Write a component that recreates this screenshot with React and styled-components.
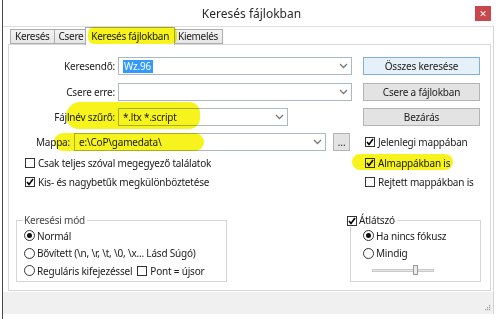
import React from 'react'
import styled, { createGlobalStyle } from 'styled-components'

const GlobalStyle = createGlobalStyle`
  html, body { margin:0; padding:0; background:#fff; }
  body {
    font-family: "Noto Sans", "DejaVu Sans", sans-serif;
    font-size: 10px;
    letter-spacing: -0.2px;
    color: #1b1b1b;
  }
  * { box-sizing: border-box; }
`

const Window = styled.div`
  position: relative;
  width: 498px;
  height: 319px;
  margin-left: 2px;
  border-left: 1px solid #4a4a4a;
  background: #fff;
  display: flex;
  flex-direction: column;
`

const TitleBar = styled.div`
  height: 26px;
  display: grid;
  grid-template-columns: 1fr auto 1fr;
  align-items: center;
`

const Title = styled.div`
  grid-column: 2;
  font-size: 12px;
  letter-spacing: 0;
  color: #2b2b2b;
`

const CloseButton = styled.div`
  grid-column: 3;
  justify-self: end;
  margin-right: 9px;
  width: 16px;
  height: 15px;
  background: #c7474c;
  color: #fff;
  display: flex;
  align-items: center;
  justify-content: center;
  font-size: 9px;
  line-height: 1;
`

const Client = styled.div`
  height: 288px;
  margin-right: 6px;
  border-top: 1px solid #dedede;
  border-right: 1px solid #d4d4d4;
  display: flex;
  flex-direction: column;
`

const TabArea = styled.div`
  flex: 1;
  display: flex;
  flex-direction: column;
  padding: 0 2px 0 5px;
`

const TabStrip = styled.div`
  height: 17px;
  display: flex;
  align-items: flex-end;
  padding-left: 2px;
`

const Tab = styled.div`
  position: relative;
  height: ${p => (p.$active ? 18 : 15)}px;
  margin: ${p => (p.$active ? '0 -2px -1px -2px' : '0 -1px 0 0')};
  padding: 0 ${p => (p.$active ? 5 : 4)}px;
  border: 1px solid #acacac;
  border-bottom: ${p => (p.$active ? 'none' : '1px solid #acacac')};
  background: ${p => (p.$active ? '#fff' : 'linear-gradient(#f3f3f3, #e6e6e6)')};
  z-index: ${p => (p.$active ? 2 : 1)};
  line-height: ${p => (p.$active ? 16 : 13)}px;
  letter-spacing: -0.3px;
  white-space: nowrap;
`

const Panel = styled.div`
  flex: 1;
  margin-bottom: 1px;
  border: 1px solid #d9d9d9;
  background: #fff;
  padding: 12px 9px 0 7px;
`

const TopGrid = styled.div`
  display: grid;
  grid-template-columns: 336px 117px;
  grid-template-rows: 26px 25px 25px 21px 19px 18px;
  column-gap: 11px;
  align-items: start;
`

const FieldRow = styled.div`
  display: flex;
  align-items: center;
  height: 18px;
  gap: ${p => p.$gap || 3}px;
`

const Label = styled.div`
  width: ${p => p.$w}px;
  text-align: right;
  white-space: nowrap;
`

const Combo = styled.div`
  width: ${p => p.$w}px;
  height: 18px;
  border: 1px solid #abb9c7;
  background: #fff;
  display: flex;
  align-items: center;
  justify-content: space-between;
  padding: 0 3px 0 4px;
  white-space: nowrap;
`

const Selected = styled.span`
  background: #3399ff;
  color: #fff;
  padding: 0 2px 0 1px;
  line-height: 13px;
`

const Chevron = () => (
  <svg width="9" height="6" viewBox="0 0 9 6">
    <polyline points="1,1 4.5,4.5 8,1" fill="none" stroke="#7a7a7a" strokeWidth="1.3" />
  </svg>
)

const Button = styled.div`
  width: ${p => p.$w || 117}px;
  height: 18px;
  border: 1px solid ${p => (p.$primary ? '#7cb3dc' : '#b4b4b4')};
  background: ${p => (p.$primary ? '#e6f0f8' : '#e3e3e3')};
  display: flex;
  align-items: center;
  justify-content: center;
  color: #222;
  margin-left: ${p => p.$ml || 0}px;
`

const CheckRow = styled.div`
  display: flex;
  align-items: center;
  height: 18px;
  gap: 3px;
  padding-left: ${p => p.$indent || 0}px;
  white-space: nowrap;
`

const Box = styled.span`
  width: 10px;
  height: 10px;
  border: 1px solid #333;
  background: #fff;
  display: inline-flex;
  align-items: center;
  justify-content: center;
  flex: none;
`

const Check = ({ on }) => (
  <Box>
    {on && (
      <svg width="8" height="8" viewBox="0 0 8 8">
        <polyline points="1,4 3,6.5 7,1" fill="none" stroke="#000" strokeWidth="1.6" />
      </svg>
    )}
  </Box>
)

const RadioCircle = styled.span`
  width: 11px;
  height: 11px;
  border: 1px solid #333;
  border-radius: 50%;
  background: #fff;
  display: inline-flex;
  align-items: center;
  justify-content: center;
  flex: none;
  &::after {
    content: '';
    width: 5px;
    height: 5px;
    border-radius: 50%;
    background: ${p => (p.$on ? '#111' : 'transparent')};
  }
`

const RadioRow = styled.div`
  display: flex;
  align-items: center;
  height: 17.5px;
  gap: 2px;
  padding-left: ${p => p.$indent || 0}px;
  white-space: nowrap;
`

const BottomRow = styled.div`
  display: flex;
  justify-content: space-between;
  margin-top: 23px;
`

const GroupBox = styled.fieldset`
  width: ${p => p.$w}px;
  height: 68px;
  margin: 0;
  padding: 0;
  border: 1px solid #d5d5d5;
  min-width: 0;
`

const Legend = styled.legend`
  margin-left: ${p => p.$ml}px;
  padding: 0 2px 0 1px;
  display: flex;
  align-items: center;
  gap: 2px;
  line-height: 13px;
  color: ${p => (p.$muted ? '#444' : '#1b1b1b')};
`

const SliderRow = styled.div`
  height: 16px;
  display: flex;
  align-items: center;
  padding-left: 21px;
`

const Track = styled.div`
  position: relative;
  width: 62px;
  height: 3px;
  border: 1px solid #c9c9c9;
  background: #e7e7e7;
`

const Thumb = styled.div`
  position: absolute;
  left: 40px;
  top: -5px;
  width: 5px;
  height: 10px;
  border: 1px solid #9a9a9a;
  background: #eaeaea;
`

const StatusBar = styled.div`
  height: 22px;
  background: #f0f0f0;
  display: flex;
  justify-content: flex-end;
  align-items: flex-end;
  padding: 0 2px 3px 0;
`

const Grip = () => (
  <svg width="7" height="7" viewBox="0 0 7 7">
    {[[5, 1], [3, 3], [5, 3], [1, 5], [3, 5], [5, 5]].map(([x, y], i) => (
      <rect key={i} x={x} y={y} width="1.2" height="1.2" fill="#9a9a9a" />
    ))}
  </svg>
)

const Highlight = styled.div`
  position: absolute;
  left: ${p => p.$x}px;
  top: ${p => p.$y}px;
  width: ${p => p.$w}px;
  height: ${p => p.$h}px;
  border-radius: ${p => p.$r};
  background: #f6f41c;
  mix-blend-mode: multiply;
  pointer-events: none;
  z-index: 5;
`

export default function App() {
  return (
    <>
      <GlobalStyle />
      <Window>
        <TitleBar>
          <Title>Keresés fájlokban</Title>
          <CloseButton>✕</CloseButton>
        </TitleBar>
        <Client>
          <TabArea>
            <TabStrip>
              <Tab>Keresés</Tab>
              <Tab>Csere</Tab>
              <Tab $active>Keresés fájlokban</Tab>
              <Tab>Kiemelés</Tab>
            </TabStrip>
            <Panel>
              <TopGrid>
                <FieldRow>
                  <Label $w={99}>Keresendő:</Label>
                  <Combo $w={234}><Selected>Wz.96</Selected><Chevron /></Combo>
                </FieldRow>
                <Button $primary>Összes keresése</Button>

                <FieldRow>
                  <Label $w={99}>Csere erre:</Label>
                  <Combo $w={234}><span /><Chevron /></Combo>
                </FieldRow>
                <Button>Csere a fájlokban</Button>

                <FieldRow>
                  <Label $w={99}>Fájlnév szűrő:</Label>
                  <Combo $w={170}><span>*.ltx *.script</span><Chevron /></Combo>
                </FieldRow>
                <Button>Bezárás</Button>

                <FieldRow $gap={4}>
                  <Label $w={54}>Mappa:</Label>
                  <Combo $w={252}><span>e:\CoP\gamedata\</span><Chevron /></Combo>
                  <Button $w={17} $ml={3}>…</Button>
                </FieldRow>
                <CheckRow $indent={2}><Check on />Jelenlegi mappában</CheckRow>

                <CheckRow $indent={9}><Check />Csak teljes szóval megegyező találatok</CheckRow>
                <CheckRow $indent={2}><Check on />Almappákban is</CheckRow>

                <CheckRow $indent={9}><Check on />Kis- és nagybetűk megkülönböztetése</CheckRow>
                <CheckRow $indent={2}><Check />Rejtett mappákban is</CheckRow>
              </TopGrid>

              <BottomRow>
                <GroupBox $w={211}>
                  <Legend $ml={6} $muted>Keresési mód</Legend>
                  <RadioRow $indent={7}><RadioCircle $on />Normál</RadioRow>
                  <RadioRow $indent={7}><RadioCircle />Bővített (\n, \r, \t, \0, \x... Lásd Súgó)</RadioRow>
                  <RadioRow $indent={7}>
                    <RadioCircle />Reguláris kifejezéssel
                    <CheckRow $indent={3}><Check />Pont = újsor</CheckRow>
                  </RadioRow>
                </GroupBox>
                <GroupBox $w={131}>
                  <Legend $ml={-5}><Check on />Átlátszó</Legend>
                  <RadioRow $indent={12}><RadioCircle $on />Ha nincs fókusz</RadioRow>
                  <RadioRow $indent={12}><RadioCircle />Mindig</RadioRow>
                  <SliderRow><Track><Thumb /></Track></SliderRow>
                </GroupBox>
              </BottomRow>
            </Panel>
          </TabArea>
          <StatusBar><Grip /></StatusBar>
        </Client>

        <Highlight $x={85} $y={27} $w={89} $h={17} $r="6px" />
        <Highlight $x={63} $y={102} $w={134} $h={27} $r="16px 12px 12px 14px" />
        <Highlight $x={51} $y={133} $w={150} $h={18} $r="9px" />
        <Highlight $x={349} $y={154} $w={101} $h={16} $r="8px" />
      </Window>
    </>
  )
}
